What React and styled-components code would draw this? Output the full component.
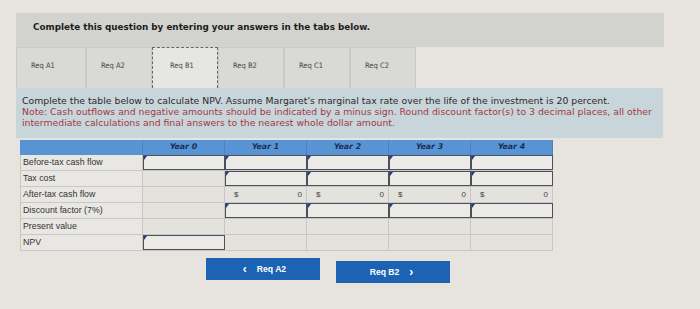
import styled, { createGlobalStyle } from "styled-components";

const GlobalStyle = createGlobalStyle`
    body {
        margin: 0;
        background: #e7e4df;
        font-family: "DejaVu Sans", Verdana, sans-serif;
    }
`;

const tabs = ["Req A1", "Req A2", "Req B1", "Req B2", "Req C1", "Req C2"];
const years = ["Year 0", "Year 1", "Year 2", "Year 3", "Year 4"];

// cell kinds: i = input, g = gray, d = dollar display
const rows = [
    { label: "Before-tax cash flow", cells: ["i", "i", "i", "i", "i"] },
    { label: "Tax cost", cells: ["g", "i", "i", "i", "i"] },
    { label: "After-tax cash flow", cells: ["g", "d", "d", "d", "d"] },
    { label: "Discount factor (7%)", cells: ["g", "i", "i", "i", "i"] },
    { label: "Present value", cells: ["g", "g", "g", "g", "g"] },
    { label: "NPV", cells: ["i", "g", "g", "g", "g"] },
];

const App = () => {
    return (
        <>
            <GlobalStyle />
            <Page>
                <Header>Complete this question by entering your answers in the tabs below.</Header>
                <Tabs>
                    {tabs.map((t) => (
                        <Tab key={t} $active={t === "Req B1"}>
                            {t}
                        </Tab>
                    ))}
                </Tabs>
                <Panel>
                    <Line>
                        Complete the table below to calculate NPV. Assume Margaret's marginal tax rate over the life of the investment is 20 percent.
                    </Line>
                    <Line $note>
                        Note: Cash outflows and negative amounts should be indicated by a minus sign. Round discount factor(s) to 3 decimal places, all other
                    </Line>
                    <Line $note>intermediate calculations and final answers to the nearest whole dollar amount.</Line>
                </Panel>
                <Table>
                    <HeadRow>
                        <HeadCell />
                        {years.map((y) => (
                            <HeadCell key={y}>{y}</HeadCell>
                        ))}
                    </HeadRow>
                    {rows.map((r) => (
                        <Row key={r.label}>
                            <Label>{r.label}</Label>
                            {r.cells.map((c, i) => {
                                if (c === "i") return <Input key={i} />;
                                if (c === "d")
                                    return (
                                        <Display key={i}>
                                            <span>$</span>
                                            <span>0</span>
                                        </Display>
                                    );
                                return <Gray key={i} />;
                            })}
                        </Row>
                    ))}
                </Table>
                <Buttons>
                    <NavButton>
                        <Arrow>‹</Arrow> Req A2
                    </NavButton>
                    <NavButton $offset>
                        Req B2 <Arrow>›</Arrow>
                    </NavButton>
                </Buttons>
            </Page>
        </>
    );
};

export default App;

const Page = styled.div`
    width: 700px;
    height: 309px;
    padding-top: 13px;
    box-sizing: border-box;
    overflow: hidden;
`;

const Header = styled.div`
    margin-left: 16px;
    width: 648px;
    height: 34px;
    box-sizing: border-box;
    padding: 9px 0 0 17px;
    background: #d2d2ce;
    font-size: 8.8px;
    font-weight: bold;
    color: #1d1d1d;
`;

const Tabs = styled.div`
    display: flex;
    margin-left: 16px;
    height: 41px;
`;

const Tab = styled.div`
    width: 66px;
    box-sizing: border-box;
    padding: 13px 0 0 ${(p) => (p.$active ? "17px" : "14px")};
    font-family: "DejaVu Sans Condensed", "DejaVu Sans", sans-serif;
    font-size: 7.5px;
    color: #444;
    background: ${(p) => (p.$active ? "#e6e6e2" : "#d9d9d5")};
    border: ${(p) => (p.$active ? "1px dashed #666" : "1px solid #c9c9c5")};
    border-bottom: none;
    &:first-child {
        width: 70px;
    }
`;

const Panel = styled.div`
    margin-left: 16px;
    width: 647px;
    height: 50px;
    box-sizing: border-box;
    padding: 7px 0 0 6px;
    background: #c8d5db;
`;

const Line = styled.div`
    font-size: 9.3px;
    line-height: 11px;
    white-space: nowrap;
    color: ${(p) => (p.$note ? "#a3393f" : "#2a2a2a")};
`;

const Table = styled.div`
    margin: 2px 0 0 20px;
    width: 533px;
`;

const Row = styled.div`
    display: grid;
    grid-template-columns: 123px repeat(5, 82px);
    height: 15px;
    border-bottom: 1px solid #c9c7c2;
`;

const HeadRow = styled(Row)`
    height: 15px;
    background: #5894d4;
    border-bottom: none;
`;

const HeadCell = styled.div`
    font-size: 7.8px;
    font-weight: bold;
    font-style: italic;
    color: #1b2c55;
    text-align: center;
    line-height: 13px;
    border-right: 1px solid #4a82bd;
`;

const Label = styled.div`
    font-family: "Liberation Sans", Arial, sans-serif;
    font-size: 8.8px;
    line-height: 15px;
    padding-left: 2px;
    color: #333;
    background: #e9e7e3;
    border-left: 1px solid #c9c7c2;
    border-right: 1px solid #c9c7c2;
`;

const Gray = styled.div`
    background: #e4e2dd;
    border-right: 1px solid #c9c7c2;
`;

const Input = styled.div`
    position: relative;
    background: #ebeae6;
    border: 1px solid #4a505e;
    box-sizing: border-box;
    &::before {
        content: "";
        position: absolute;
        left: 0;
        top: 0;
        border-top: 4px solid #1f3d8a;
        border-right: 3px solid transparent;
    }
`;

const Display = styled.div`
    display: flex;
    justify-content: space-between;
    align-items: center;
    padding: 0 4px 0 9px;
    font-family: "Liberation Sans", Arial, sans-serif;
    font-size: 8px;
    color: #444;
    background: #e4e2dd;
    border-right: 1px solid #c9c7c2;
`;

const Buttons = styled.div`
    display: flex;
    align-items: flex-start;
    gap: 16px;
    margin: 7px 0 0 206px;
`;

const NavButton = styled.div`
    width: 114px;
    height: 22px;
    margin-top: ${(p) => (p.$offset ? "3px" : "0")};
    display: flex;
    align-items: center;
    justify-content: center;
    gap: 7px;
    background: #1c64b3;
    color: #fff;
    font-family: "Liberation Sans", Arial, sans-serif;
    font-size: 8.6px;
    font-weight: bold;
`;

const Arrow = styled.span`
    font-size: 12px;
    line-height: 10px;
    margin: 0 3px;
`;
